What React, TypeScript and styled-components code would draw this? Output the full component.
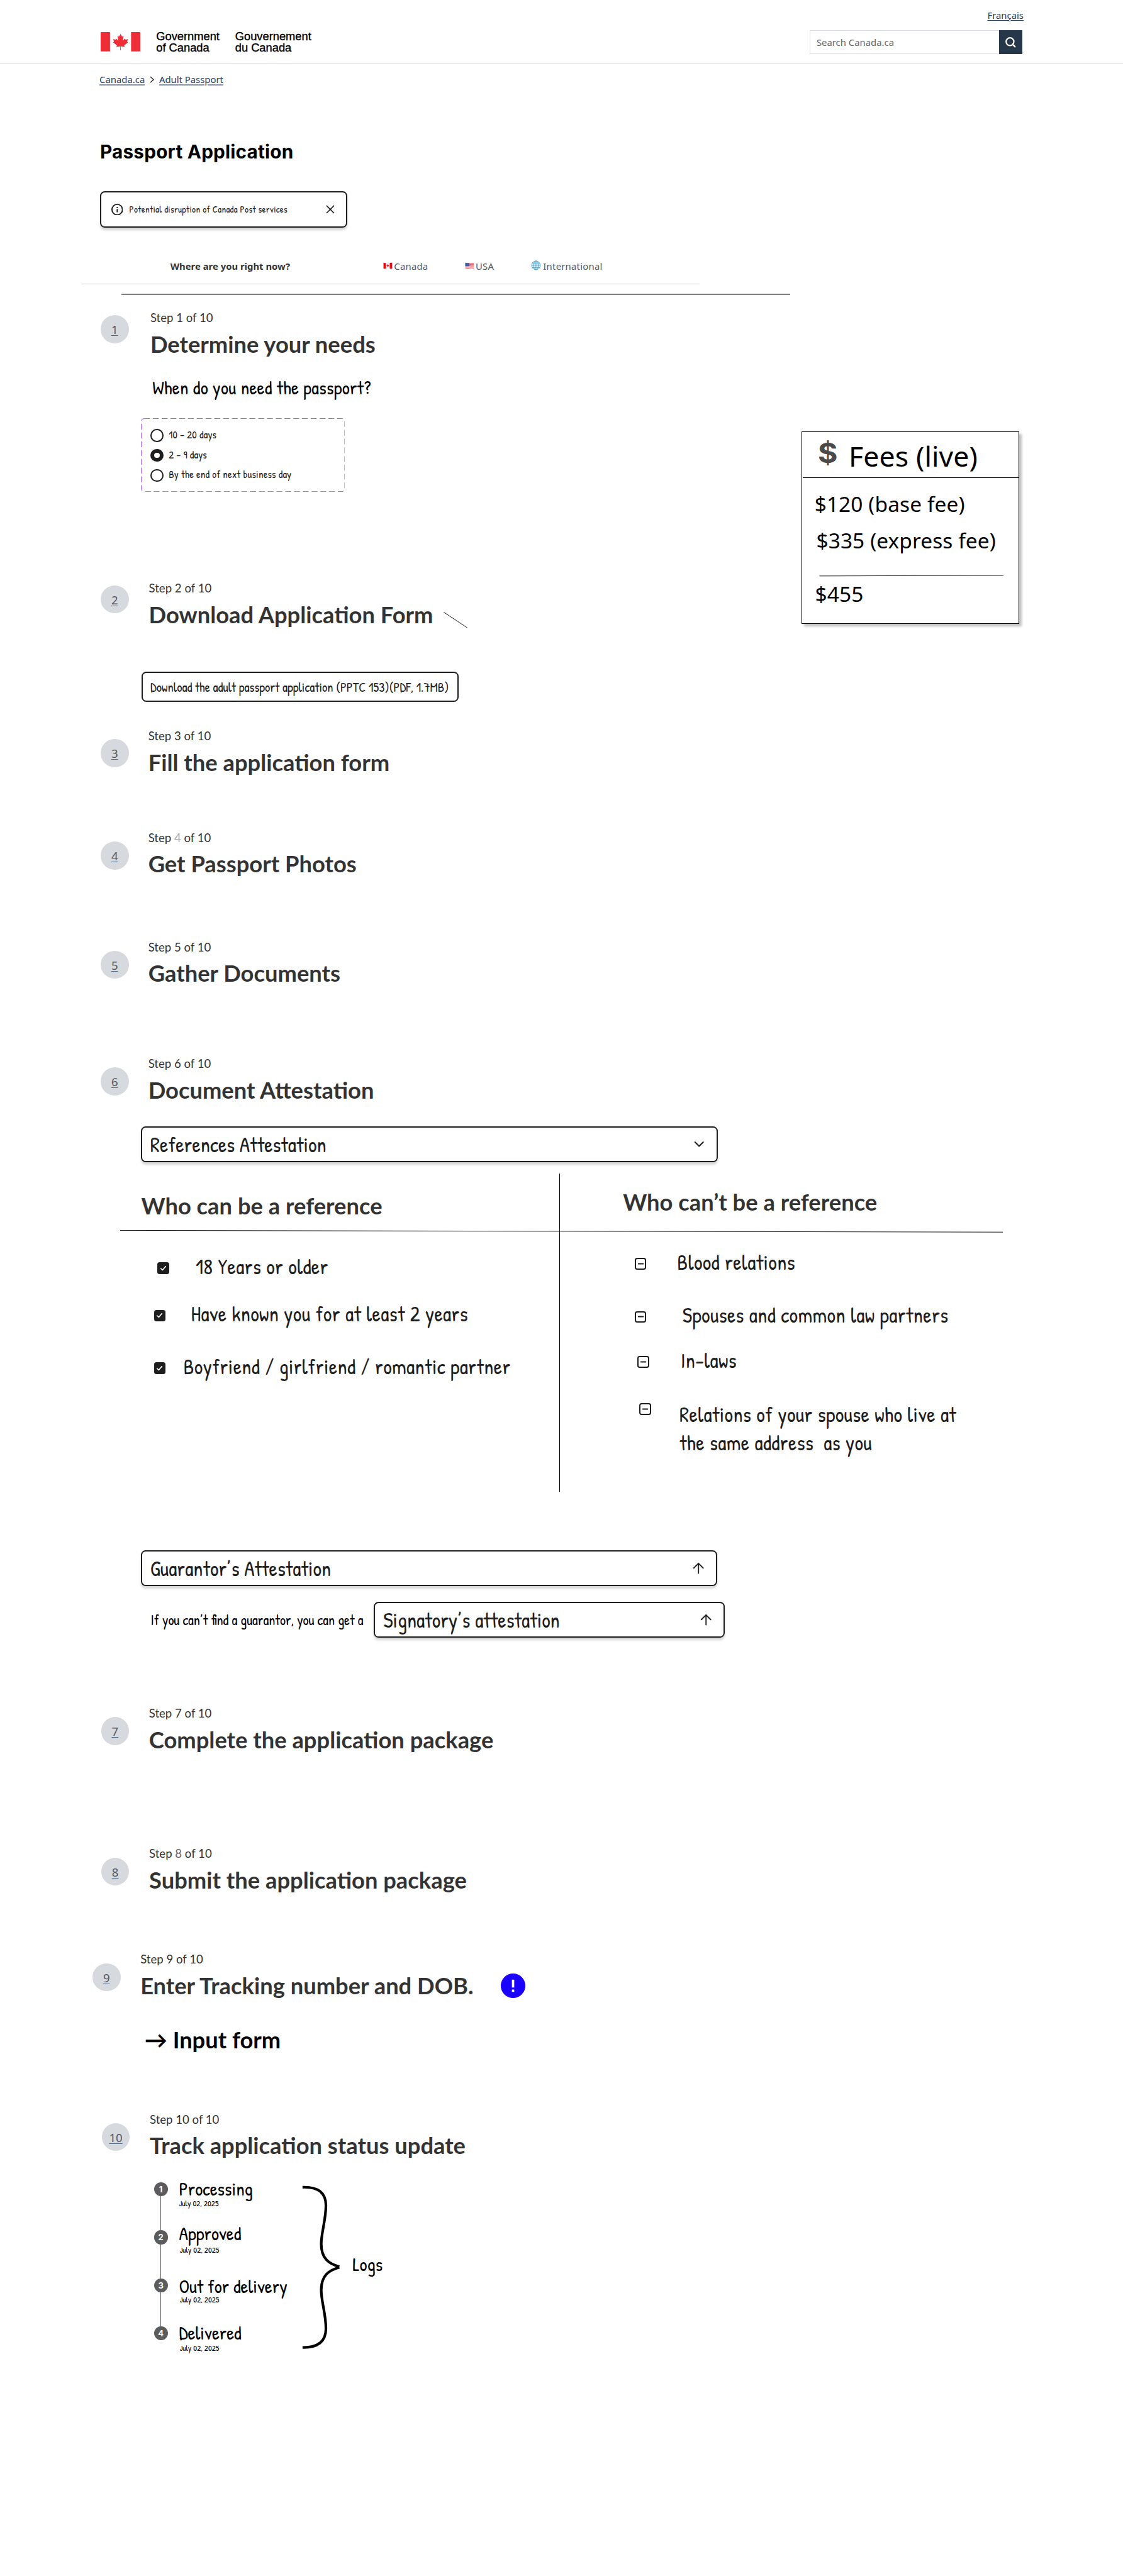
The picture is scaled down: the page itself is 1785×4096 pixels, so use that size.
import React from "react";
import styled, { createGlobalStyle } from "styled-components";

const GlobalStyle = createGlobalStyle`
  *, *::before, *::after { box-sizing: border-box; }
  html, body { margin: 0; padding: 0; background: #fff; }
  svg { display: block; flex: none; }
`;

const noto = `"Noto Sans", "Open Sans", sans-serif`;
const lato = `Lato, "Noto Sans", sans-serif`;
const inter = `Inter, "Noto Sans", sans-serif`;
const hand = `"Patrick Hand", "Noto Sans", cursive`;
const ink = "#1e1e1e";

const Page = styled.div`
  width: 1920px;
  height: 4405px;
  zoom: 0.9296875;
  overflow: hidden;
  background: #fff;
  color: #333;
  font-family: ${noto};
  white-space: nowrap;
`;

/* ---------- header ---------- */

const Header = styled.header`
  display: flex;
  justify-content: space-between;
  height: 109px;
  padding: 0 170px 0 172px;
  border-bottom: 1px solid #d6d9dd;
`;

const Brand = styled.div`
  display: flex;
  padding-top: 55px;
`;

const Wordmark = styled.div<{ $left: number; $width: number }>`
  width: ${(p) => p.$width}px;
  margin: -1.8px 0 0 ${(p) => p.$left}px;
  font: 400 19.7px/18.4px "Liberation Sans", Arial, sans-serif;
  color: #000;
  -webkit-text-stroke: 0.4px #000;
`;

const HeaderTools = styled.div`
  display: flex;
  flex-direction: column;
  align-items: flex-end;
  padding-top: 15px;
`;

const Language = styled.a`
  font-size: 16px;
  line-height: 22px;
  color: #284162;
  text-decoration: underline;
  text-decoration-thickness: 1px;
  text-underline-offset: 2px;
`;

const SearchBar = styled.div`
  display: flex;
  width: 364px;
  height: 40px;
  margin: 15px 2px 0 0;
`;

const SearchField = styled.div`
  flex: 1;
  padding-left: 11px;
  border: 1px solid #d6d9dd;
  border-right: 0;
  font-size: 16px;
  line-height: 39px;
  color: #666;
`;

const SearchButton = styled.div`
  display: flex;
  align-items: center;
  justify-content: center;
  width: 40px;
  background: #26374a;
`;

const Crumbs = styled.nav`
  display: flex;
  align-items: center;
  height: 39px;
  padding: 15px 0 0 170px;
  font-size: 16px;
  line-height: 24px;
`;

const Crumb = styled.a`
  color: #284162;
  text-decoration: underline;
  text-decoration-color: #8594a7;
  text-decoration-thickness: 2px;
  text-underline-offset: 2px;
`;

const CrumbArrow = styled.svg`
  margin: 0 8.4px 0 8px;
`;

const PageTitle = styled.h1`
  margin: 91.6px 0 0 171px;
  font: 700 32px/40px ${inter};
  letter-spacing: 0.2px;
  color: #000;
`;

const Alert = styled.div`
  display: flex;
  align-items: center;
  width: 423px;
  height: 62px;
  margin: 47.4px 0 0 171px;
  padding: 0 20px 0 17px;
  border: 2.2px solid ${ink};
  border-radius: 8px;
  box-shadow: 0 4px 4px rgba(0, 0, 0, 0.16);
`;

const AlertText = styled.span`
  flex: 1;
  margin-left: 11px;
  font: 400 16px/24px ${hand};
  letter-spacing: 0.34px;
  color: ${ink};
`;

/* ---------- upper columns ---------- */

const Columns = styled.div`
  display: flex;
  height: 858px;
`;

const MainColumn = styled.div`
  width: 1370px;
`;

const LocationBar = styled.div`
  display: flex;
  width: 1057px;
  height: 97px;
  margin-left: 139px;
  padding: 55px 0 0 152.2px;
  border-bottom: 1px solid #d9d9d9;
  font-size: 16px;
  line-height: 22px;
`;

const LocationQuestion = styled.strong`
  width: 363.5px;
  font-weight: 700;
  color: #333;
`;

const LocationOption = styled.span<{ $width: number }>`
  display: flex;
  width: ${(p) => p.$width}px;
  letter-spacing: 0.25px;
  color: #54575f;
`;

const FlagSlot = styled.span<{ $width: number; $top: number }>`
  width: ${(p) => p.$width}px;
  padding-top: ${(p) => p.$top}px;
`;

const Divider = styled.div`
  width: 1143px;
  height: 2px;
  margin: 16px 0 27.6px 208px;
  background: #7f7f7f;
`;

/* ---------- steps ---------- */

const StepRow = styled.section<{ $height: number; $left: number; $gap: number }>`
  display: flex;
  gap: ${(p) => p.$gap}px;
  height: ${(p) => p.$height}px;
  padding-left: ${(p) => p.$left}px;
`;

const Badge = styled.a<{ $drop: number }>`
  flex: none;
  width: 48px;
  height: 48px;
  margin-top: ${(p) => p.$drop}px;
  border-radius: 50%;
  background: #d6d9dd;
  color: #54575c;
  font-size: 20px;
  line-height: 50px;
  text-align: center;
  text-decoration: underline;
  text-decoration-color: #4f6685;
  text-decoration-thickness: 1px;
  text-underline-offset: 2px;
`;

const StepBody = styled.div`
  flex: 1;
`;

const StepLabel = styled.div`
  font: 400 20px/24px ${lato};
  color: #333;
`;

const StepCount = styled.span<{ $tone: string }>`
  color: ${(p) => p.$tone};
`;

const TitleLine = styled.div`
  display: flex;
  align-items: center;
  margin-top: 9px;
`;

const Heading = styled.h2`
  margin: 0;
  font: 700 39.08px/48px ${lato};
  color: #333;
`;

const Question = styled.p`
  margin: 30.4px 0 0 3.7px;
  font: 400 32px/40px ${hand};
  letter-spacing: 0.32px;
  color: #000;
`;

const Options = styled.div`
  position: relative;
  width: 349px;
  height: 126px;
  margin: 32px 0 0 -16.5px;
  padding: 13px 0 0 17px;
`;

const DashedFrame = styled.svg`
  position: absolute;
  inset: 0;
`;

const Option = styled.div`
  display: flex;
  align-items: center;
  gap: 9px;
  height: 34px;
`;

const Radio = styled.span<{ $on?: boolean }>`
  width: 22px;
  height: 22px;
  border: ${(p) => (p.$on ? 7 : 2.2)}px solid ${ink};
  border-radius: 50%;
`;

const OptionText = styled.span`
  padding-bottom: 2.6px;
  font: 400 18px/24px ${hand};
  letter-spacing: 0.18px;
  color: ${ink};
`;

const DownloadButton = styled.div`
  width: 543px;
  height: 52px;
  margin: 73.4px 0 0 -13px;
  padding: 3px 0 0 13.5px;
  border: 2.2px solid ${ink};
  border-radius: 8px;
  font: 400 22px/46px ${hand};
  color: ${ink};
`;

const Slant = styled.svg`
  margin: 19px 0 0 18px;
`;

/* ---------- fees ---------- */

const FeesCard = styled.aside`
  width: 373px;
  height: 329px;
  margin-top: 349px;
  border: 1.1px solid #000;
  box-shadow: 4px 4px 4px rgba(0, 0, 0, 0.25);
  color: #000;
`;

const FeesHeader = styled.div`
  display: flex;
  height: 78px;
  margin-left: 1px;
  padding: 9px 0 0 26px;
  border-bottom: 1.1px solid #000;
`;

const Dollar = styled.span`
  width: 53px;
  font: 700 47px/56px ${inter};
  color: #4a4a4a;
  transform: scaleX(1.1);
  transform-origin: left;
`;

const FeesTitle = styled.span`
  padding-top: 4px;
  font-size: 48px;
  line-height: 56px;
  letter-spacing: 0.1px;
`;

const FeeLine = styled.div<{ $top: number; $left: number }>`
  margin: ${(p) => p.$top}px 0 0 ${(p) => p.$left}px;
  font-size: 36px;
  line-height: 48px;
  letter-spacing: 0.1px;
`;

const FeeRule = styled.svg`
  margin: 35px 0 0 29px;
`;

/* ---------- attestation ---------- */

const Select = styled.div<{ $width: number; $top?: number }>`
  display: flex;
  align-items: center;
  justify-content: space-between;
  width: ${(p) => p.$width}px;
  height: 62px;
  margin-top: ${(p) => p.$top ?? 0}px;
  padding: 0 19px 0 14px;
  border: 2.2px solid ${ink};
  border-radius: 8px;
  box-shadow: 0 4px 4px rgba(0, 0, 0, 0.16);
  font: 400 36px/48px ${hand};
  color: ${ink};
`;

const SelectText = styled.span`
  padding-top: 2.4px;
`;

const Attestation = styled.div`
  margin: 38px 0 0 -12.8px;
`;

const ReferenceTable = styled.div`
  position: relative;
  display: flex;
  width: 1510px;
  height: 544px;
  margin: 19px 0 0 -35.7px;
`;

const TableRule = styled.svg`
  position: absolute;
  left: 0;
  top: 96px;
`;

const ReferenceColumn = styled.div<{ $width: number; $top: number; $left: number; $divided?: boolean }>`
  width: ${(p) => p.$width}px;
  padding: ${(p) => p.$top}px 0 0 ${(p) => p.$left}px;
  border-left: ${(p) => (p.$divided ? "1.1px solid #000" : "0")};
`;

const Rule = styled.div<{ $top: number; $indent: number; $gap: number; $tall?: boolean }>`
  display: flex;
  align-items: ${(p) => (p.$tall ? "flex-start" : "center")};
  gap: ${(p) => p.$gap}px;
  height: ${(p) => (p.$tall ? 96 : 48)}px;
  margin: ${(p) => p.$top}px 0 0 ${(p) => p.$indent}px;
`;

const RuleText = styled.span<{ $tall?: boolean }>`
  padding: ${(p) => (p.$tall ? "1.3px 0 0" : "0 0 5px")};
  font: 400 36px/48px ${hand};
  letter-spacing: 0.38px;
  white-space: pre;
  color: ${ink};
`;

const Tick = styled.span<{ $filled?: boolean; $top?: number }>`
  display: flex;
  align-items: center;
  justify-content: center;
  flex: none;
  width: 20px;
  height: 20px;
  margin-top: ${(p) => p.$top ?? 0}px;
  border: 2.2px solid ${ink};
  border-radius: 4px;
  background: ${(p) => (p.$filled ? ink : "#fff")};
`;

const Signatory = styled.div`
  display: flex;
  margin-top: 26px;
`;

const SignatoryText = styled.span`
  width: 398.5px;
  padding: 12.7px 0 0 17px;
  font: 400 24px/40px ${hand};
  color: #000;
`;

/* ---------- tracking ---------- */

const Notice = styled.svg`
  margin-left: 47px;
`;

const InputForm = styled.div`
  margin: 44px 0 0 7px;
  font: 700 39px/48px ${lato};
  color: #000;
`;

const Timeline = styled.div`
  display: flex;
  margin: 39px 0 0 7px;
`;

const Rail = styled.div`
  display: flex;
  flex-direction: column;
  align-items: center;
  width: 24px;
`;

const Dot = styled.span`
  width: 24px;
  height: 24px;
  border-radius: 50%;
  background: #5c5c5c;
  color: #fff;
  font: 700 14px/25.5px ${inter};
  text-align: center;
`;

const Link = styled.span`
  width: 1.1px;
  height: 58px;
  background: #5c5c5c;
`;

const Events = styled.div`
  width: 228.5px;
  padding-left: 19px;
  font-family: ${hand};
  color: #000;
`;

const EventName = styled.div<{ $top: number }>`
  margin-top: ${(p) => p.$top}px;
  font-size: 32px;
  line-height: 32px;
`;

const EventDate = styled.div<{ $top: number; $left: number }>`
  margin: ${(p) => p.$top}px 0 0 ${(p) => p.$left}px;
  font-size: 14px;
  line-height: 16px;
`;

const Brace = styled.svg`
  margin-top: 5px;
`;

const Logs = styled.div`
  margin: 124.5px 0 0 17.4px;
  font: 400 32px/32px ${hand};
  color: #000;
`;

const leaf =
  "m-90 2030 45-863a95 95 0 0 0-111-98l-859 151 116-320a65 65 0 0 0-20-73l-941-762 212-99a65 65 0 0 0 34-79l-186-572 542 115a65 65 0 0 0 73-38l105-247 423 454a65 65 0 0 0 111-57l-204-1052 327 189a65 65 0 0 0 91-27l332-652 332 652a65 65 0 0 0 91 27l327-189-204 1052a65 65 0 0 0 111 57l423-454 105 247a65 65 0 0 0 73 38l542-115-186 572a65 65 0 0 0 34 79l212 99-941 762a65 65 0 0 0-20 73l116 320-859-151a95 95 0 0 0-111 98l45 863z";

const CanadaFlag = () => (
  <svg width="68" height="33" viewBox="0 0 68 33">
    <path fill="#ef2d36" d="M0 0h16v33H0zM52 0h16v33H52z" />
    <path fill="#ef2d36" d={leaf} transform="translate(34 16.9) scale(0.007)" />
  </svg>
);

const SmallCanada = () => (
  <svg width="16" height="12" viewBox="0 0 16 12">
    <path fill="#f2f0f0" d="M4 1.3q4 .6 8 0v9.2q-4-.6-8 0z" />
    <path fill="#e00b14" d="M.6.8Q2.5 1.6 4.7 1.2v9.5Q2.5 11.2.6 10.8zM11.3 1Q13.5.4 15.4.9v10q-2-.5-4.1 0z" />
    <path fill="#e00b14" d={leaf} transform="translate(8 5.8) scale(0.00125)" />
  </svg>
);

const SmallUSA = () => (
  <svg width="16" height="12" viewBox="0 0 16 12">
    <path fill="#f1e4e6" d="M.6.8q3.7 1 7.4.4t7.4-.2v10q-3.7-.6-7.4 0t-7.4-.2z" />
    <path
      fill="none"
      stroke="#d9575f"
      strokeWidth="1"
      d="M.6 1.6q3.7.8 7.4.3t7.4-.3M.6 3.6q3.7.8 7.4.3t7.4-.3M.6 5.6q3.7.8 7.4.3t7.4-.3M.6 7.6q3.7.8 7.4.2t7.4-.1M.6 9.8q3.7.8 7.4.2t7.4 0"
    />
    <path fill="#3f5f9f" d="M.6.8q3.7 1 7.2.5v5.2q-3.6.5-7.2.1z" />
  </svg>
);

const Globe = () => (
  <svg width="17" height="17" viewBox="0 0 17 17" fill="none" stroke="#4fa9d6" strokeWidth="1">
    <circle cx="8.5" cy="8.5" r="7.5" fill="#d8f0fb" />
    <ellipse cx="8.5" cy="8.5" rx="4" ry="7.5" />
    <path d="M8.5 1v15M1 8.5h15M2.3 4.6h12.4M2.3 12.4h12.4" />
  </svg>
);

const ArrowUp = () => (
  <svg width="22" height="22" viewBox="0 0 22 22" fill="none" stroke={ink} strokeWidth="2">
    <path d="M11 20V3M3 11l8-8 8 8" strokeLinecap="round" strokeLinejoin="round" />
  </svg>
);

const CheckMark = () => (
  <svg width="14" height="14" viewBox="0 0 14 14" fill="none" stroke="#fff" strokeWidth="1.8">
    <path d="M3 7.5l2.7 2.7L11 4" strokeLinecap="round" strokeLinejoin="round" />
  </svg>
);

const MinusMark = () => (
  <svg width="12" height="12" viewBox="0 0 12 12" stroke={ink} strokeWidth="2.2">
    <path d="M2 6h8" strokeLinecap="round" />
  </svg>
);

type StepProps = {
  n: number;
  title: string;
  height: number;
  left?: number;
  gap?: number;
  drop?: number;
  tone?: string;
  after?: React.ReactNode;
  children?: React.ReactNode;
};

const Step = ({ n, title, height, left = 172, gap = 34, drop = 18.5, tone = "#333", after, children }: StepProps) => (
  <StepRow $height={height} $left={left} $gap={gap}>
    <Badge $drop={drop}>{n}</Badge>
    <StepBody>
      <StepLabel>
        Step <StepCount $tone={tone}>{n}</StepCount> of 10
      </StepLabel>
      <TitleLine>
        <Heading>{title}</Heading>
        {after}
      </TitleLine>
      {children}
    </StepBody>
  </StepRow>
);

const allowed = [
  { text: "18 Years or older", top: 59.3, indent: 27.5, gap: 45.6 },
  { text: "Have known you for at least 2 years", top: 33, indent: 21.5, gap: 43.5 },
  { text: "Boyfriend / girlfriend / romantic partner", top: 42, indent: 21.5, gap: 30.6 },
];

const denied = [
  { text: "Blood relations", top: 57.9, indent: 20, gap: 52.7 },
  { text: "Spouses and common law partners", top: 43, indent: 20, gap: 61.7 },
  { text: "In-laws", top: 28.8, indent: 25, gap: 53.4 },
  { text: "Relations of your spouse who live at\nthe same address  as you", top: 41.6, indent: 28, gap: 48.6, tall: true },
];

const events = [
  { name: "Processing", top: -3.9, dateTop: 0.3, dateLeft: 0 },
  { name: "Approved", top: 27.7, dateTop: 3.6, dateLeft: 1 },
  { name: "Out for delivery", top: 39.1, dateTop: -2.4, dateLeft: 1 },
  { name: "Delivered", top: 33.7, dateTop: 1.6, dateLeft: 1 },
];

export default function App() {
  return (
    <>
      <GlobalStyle />
      <Page>
        <Header>
          <Brand>
            <CanadaFlag />
            <Wordmark $left={27} $width={135}>
              Government
              <br />
              of Canada
            </Wordmark>
            <Wordmark $left={0} $width={140}>
              Gouvernement
              <br />
              du Canada
            </Wordmark>
          </Brand>
          <HeaderTools>
            <Language>Français</Language>
            <SearchBar>
              <SearchField>Search Canada.ca</SearchField>
              <SearchButton>
                <svg width="20" height="20" viewBox="0 0 20 20" fill="none" stroke="#fff" strokeWidth="2.4">
                  <circle cx="9" cy="9" r="6.6" />
                  <path d="M13.6 13.6l4 4" strokeLinecap="round" />
                </svg>
              </SearchButton>
            </SearchBar>
          </HeaderTools>
        </Header>

        <Crumbs>
          <Crumb>Canada.ca</Crumb>
          <CrumbArrow width="8" height="12" viewBox="0 0 8 12" fill="none" stroke="#333" strokeWidth="1.6">
            <path d="M1 1l5.5 5L1 11" />
          </CrumbArrow>
          <Crumb>Adult Passport</Crumb>
        </Crumbs>

        <PageTitle>Passport Application</PageTitle>

        <Alert>
          <svg width="20" height="20" viewBox="0 0 20 20" fill="none" stroke={ink} strokeWidth="2">
            <circle cx="10" cy="10" r="9" />
            <path d="M10 9v5.5M10 5.4v2" />
          </svg>
          <AlertText>Potential disruption of Canada Post services</AlertText>
          <svg width="15" height="15" viewBox="0 0 15 15" fill="none" stroke={ink} strokeWidth="1.7">
            <path d="M1 1l13 13M14 1L1 14" />
          </svg>
        </Alert>

        <Columns>
          <MainColumn>
            <LocationBar>
              <LocationQuestion>Where are you right now?</LocationQuestion>
              <LocationOption $width={140.5}>
                <FlagSlot $width={19} $top={5}>
                  <SmallCanada />
                </FlagSlot>
                Canada
              </LocationOption>
              <LocationOption $width={113}>
                <FlagSlot $width={18} $top={5}>
                  <SmallUSA />
                </FlagSlot>
                USA
              </LocationOption>
              <LocationOption $width={130}>
                <FlagSlot $width={20.5} $top={1.5}>
                  <Globe />
                </FlagSlot>
                International
              </LocationOption>
            </LocationBar>
            <Divider />
            <Step n={1} title="Determine your needs" height={462.4} gap={37} drop={7.4}>
              <Question>When do you need the passport?</Question>
              <Options>
                <DashedFrame width="349" height="126" viewBox="0 0 349 126">
                  <rect x="0.5" y="0.5" width="348" height="125" rx="5" fill="none" stroke="#9747ff" strokeDasharray="10 5" />
                </DashedFrame>
                <Option>
                  <Radio />
                  <OptionText>10 – 20 days</OptionText>
                </Option>
                <Option>
                  <Radio $on />
                  <OptionText>2 – 9 days</OptionText>
                </Option>
                <Option>
                  <Radio />
                  <OptionText>By the end of next business day</OptionText>
                </Option>
              </Options>
            </Step>
            <Step
              n={2}
              title="Download Application Form"
              height={253}
              gap={34.5}
              drop={7}
              after={
                <Slant width="42" height="28" viewBox="0 0 42 28">
                  <path d="M.5.5l40 26.5" stroke="#000" />
                </Slant>
              }
            >
              <DownloadButton>Download the adult passport application (PPTC 153)(PDF, 1.7MB)</DownloadButton>
            </Step>
          </MainColumn>
          <FeesCard>
            <FeesHeader>
              <Dollar>$</Dollar>
              <FeesTitle>Fees (live)</FeesTitle>
            </FeesHeader>
            <FeeLine $top={21} $left={21.5}>$120 (base fee)</FeeLine>
            <FeeLine $top={14} $left={24.5}>$335 (express fee)</FeeLine>
            <FeeRule width="316" height="3" viewBox="0 0 316 3">
              <path d="M0 2L316 1" stroke="#000" />
            </FeeRule>
            <FeeLine $top={6} $left={22.5}>$455</FeeLine>
          </FeesCard>
        </Columns>

        <Step n={3} title="Fill the application form" height={173.6} gap={33.5} drop={17} />
        <Step n={4} title="Get Passport Photos" height={187} gap={33.5} tone="#aaa" />
        <Step n={5} title="Gather Documents" height={199.7} gap={33.5} />
        <Step n={6} title="Document Attestation" height={1111} gap={33.5}>
          <Attestation>
            <Select $width={986.5}>
              <SelectText>References Attestation</SelectText>
              <svg width="22" height="22" viewBox="0 0 22 22" fill="none" stroke={ink} strokeWidth="2.2">
                <path d="M4 7.5l7 7 7-7" strokeLinecap="round" strokeLinejoin="round" />
              </svg>
            </Select>
            <ReferenceTable>
              <ReferenceColumn $width={751} $top={30.7} $left={36.5}>
                <Heading>Who can be a reference</Heading>
                {allowed.map((r) => (
                  <Rule key={r.text} $top={r.top} $indent={r.indent} $gap={r.gap}>
                    <Tick $filled>
                      <CheckMark />
                    </Tick>
                    <RuleText>{r.text}</RuleText>
                  </Rule>
                ))}
              </ReferenceColumn>
              <ReferenceColumn $width={759} $top={24.1} $left={108} $divided>
                <Heading>Who can’t be a reference</Heading>
                {denied.map((r) => (
                  <Rule key={r.text} $top={r.top} $indent={r.indent} $gap={r.gap} $tall={r.tall}>
                    <Tick $top={r.tall ? 5.6 : 0}>
                      <MinusMark />
                    </Tick>
                    <RuleText $tall={r.tall}>{r.text}</RuleText>
                  </Rule>
                ))}
              </ReferenceColumn>
              <TableRule width="1510" height="6" viewBox="0 0 1510 6">
                <path d="M0 1.5L1510 4.5" stroke="#000" />
              </TableRule>
            </ReferenceTable>
            <Select $width={986} $top={100}>
              <SelectText>Guarantor’s Attestation</SelectText>
              <ArrowUp />
            </Select>
            <Signatory>
              <SignatoryText>If you can’t find a guarantor, you can get a</SignatoryText>
              <Select $width={600}>
                <SelectText>Signatory’s attestation</SelectText>
                <ArrowUp />
              </Select>
            </Signatory>
          </Attestation>
        </Step>
        <Step n={7} title="Complete the application package" height={240.3} left={172.7} />
        <Step n={8} title="Submit the application package" height={180.7} left={173} tone="#666" />
        <Step
          n={9}
          title="Enter Tracking number and DOB."
          height={273.3}
          left={158}
          after={
            <Notice width="42" height="42" viewBox="0 0 42 42">
              <circle cx="21" cy="21" r="21" fill="#1900ff" />
              <path fill="#fff" d="M19 10.5h4V24h-4zM19 27.5h4v4h-4z" />
            </Notice>
          }
        >
          <InputForm>→ Input form</InputForm>
        </Step>
        <Step n={10} title="Track application status update" height={500} left={174}>
          <Timeline>
            <Rail>
              <Dot>1</Dot>
              <Link />
              <Dot>2</Dot>
              <Link />
              <Dot>3</Dot>
              <Link />
              <Dot>4</Dot>
            </Rail>
            <Events>
              {events.map((e) => (
                <React.Fragment key={e.name}>
                  <EventName $top={e.top}>{e.name}</EventName>
                  <EventDate $top={e.dateTop} $left={e.dateLeft}>July 02, 2025</EventDate>
                </React.Fragment>
              ))}
            </Events>
            <Brace width="70" height="280" viewBox="0 0 70 280" fill="none" stroke="#000" strokeWidth="4.5">
              <path d="M2 3C28 2 42 12 42 34C42 60 34 80 34 100C34 124 46 134 65 139M65 140C46 145 34 155 34 179C34 199 42 219 42 245C42 267 28 277.5 2 277" />
            </Brace>
            <Logs>Logs</Logs>
          </Timeline>
        </Step>
      </Page>
    </>
  );
}
